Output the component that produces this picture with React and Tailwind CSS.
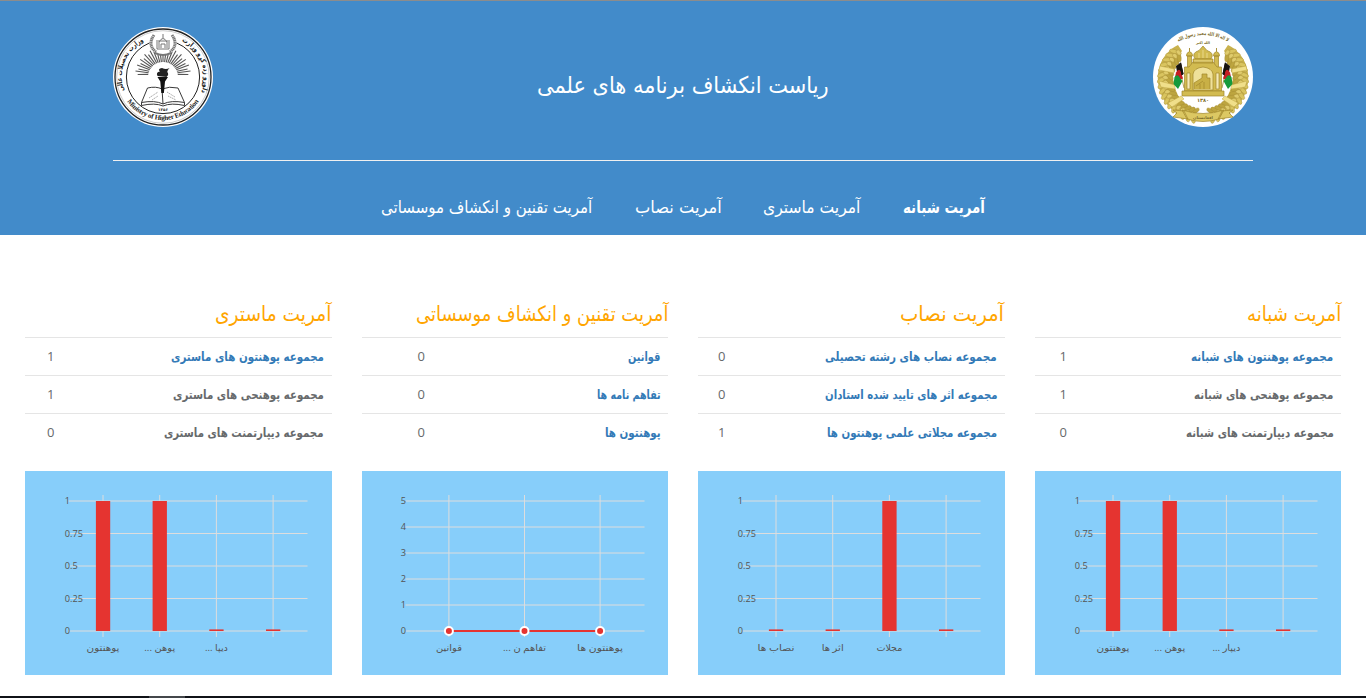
import { useLayoutEffect, useRef } from "react";

const sections = [
  {
    title: "آمریت شبانه", tw: 94, pad: "pl-[25px]",
    rows: [
      ["مجموعه پوهنتون های شبانه", 142, "1", true],
      ["مجموعه پوهنحی های شبانه", 139, "1", false],
      ["مجموعه دیپارتمنت های شبانه", 148, "0", false],
    ],
    kind: "bar", values: [1, 1, 0, 0],
    labels: [["پوهنتون", 33], ["پوهن ...", 31], ["دیپار ...", 28]],
  },
  {
    title: "آمریت نصاب", tw: 104, pad: "pl-[20px]",
    rows: [
      ["مجموعه نصاب های رشته تحصیلی", 172, "0", true],
      ["مجموعه اثر های تایید شده استادان", 172, "0", true],
      ["مجموعه مجلاتی علمی پوهنتون ها", 170, "1", true],
    ],
    kind: "bar", values: [0, 0, 1, 0],
    labels: [["نصاب ها", 37], ["اثر ها", 22], ["مجلات", 26]],
  },
  {
    title: "آمریت تقنین و انکشاف موسساتی", tw: 252, pad: "pl-[56px]",
    rows: [
      ["قوانین", 32, "0", true],
      ["تفاهم نامه ها", 64, "0", true],
      ["پوهنتون ها", 56, "0", true],
    ],
    kind: "line", values: [0, 0, 0],
    labels: [["قوانین", 26], ["تفاهم ن ...", 43], ["پوهنتون ها", 46]],
  },
  {
    title: "آمریت ماستری", tw: 116, pad: "pl-[22px]",
    rows: [
      ["مجموعه پوهنتون های ماستری", 153, "1", true],
      ["مجموعه پوهنحی های ماستری", 151, "1", false],
      ["مجموعه دیپارتمنت های ماستری", 160, "0", false],
    ],
    kind: "bar", values: [1, 1, 0, 0],
    labels: [["پوهنتون", 33], ["پوهن ...", 31], ["دیپا ...", 23]],
  },
];

const nav = [
  ["آمریت شبانه", 82, true],
  ["آمریت ماستری", 97, false],
  ["آمریت نصاب", 87, false],
  ["آمریت تقنین و انکشاف موسساتی", 211, false],
];

/* Single line of text condensed horizontally to a given width. */
function Fit({ width, children }) {
  const ref = useRef(null);
  useLayoutEffect(() => {
    const el = ref.current;
    el.style.transform = `scaleX(${width / el.offsetWidth})`;
  }, [width]);
  return (
    <span className="flex justify-start" style={{ width }}>
      <span ref={ref} className="block shrink-0 origin-right whitespace-nowrap">{children}</span>
    </span>
  );
}

function Chart({ kind, values, labels, title }) {
  const bar = kind === "bar";
  const ticks = bar ? ["0", "0.25", "0.5", "0.75", "1"] : ["0", "1", "2", "3", "4", "5"];
  const step = 130 / (ticks.length - 1);
  const xs = bar ? [78, 134.7, 191.4, 248.1] : [86.9, 162.5, 238.1];
  return (
    <svg viewBox="0 0 306.5 204" className="block h-[204px] w-full bg-[#87cefa]" aria-label={title}>
      <g stroke="#ddd" strokeWidth="1">
        {ticks.map((t, i) => (
          <line key={t} x1="43.5" x2="282.5" y1={160 - i * step} y2={160 - i * step} />
        ))}
        {xs.map((x) => <line key={x} x1={x} x2={x} y1="24" y2="166" />)}
      </g>
      {bar
        ? values.map((v, i) => (
            <rect key={i} x={xs[i] - 7.1} y={v ? 30 : 158.4} width="14.3" height={v ? 130 : 1.6} fill="#e53430" />
          ))
        : (
          <g>
            <line x1={xs[0]} x2={xs[2]} y1="160" y2="160" stroke="#e53430" strokeWidth="2" />
            {xs.map((x) => <circle key={x} cx={x} cy="160" r="4" fill="#e53430" stroke="#fff" strokeWidth="2" />)}
          </g>
        )}
      <g fill="#545454" fontSize="9.2" fontFamily="'Open Sans', sans-serif" direction="ltr" textAnchor="start">
        {ticks.map((t, i) => <text key={t} x={bar ? 39.8 : 38.8} y={163.2 - i * step}>{t}</text>)}
      </g>
      <g fill="#545454" fontSize="9" fontFamily="'Open Sans', 'DejaVu Sans', sans-serif" textAnchor="middle" direction="rtl">
        {labels.map(([t, w], i) => (
          <text key={i} x={xs[i]} y="180" textLength={w} lengthAdjust="spacingAndGlyphs">{t}</text>
        ))}
      </g>
    </svg>
  );
}

function MinistryLogo() {
  const rays = Array.from({ length: 27 }, (_, i) => (-80 + (160 * i) / 26) * (Math.PI / 180));
  return (
    <svg viewBox="0 0 100 100" className="size-[100px]">
      <defs>
        <path id="m-left" d="M12.500 67 A40 40 0 0 1 34 13" />
        <path id="m-right" d="M66 13 A40 40 0 0 1 87 68" />
        <path id="m-bottom" d="M9.500 66 A43.800 43.800 0 0 0 90.500 66" />
      </defs>
      <circle cx="50" cy="50" r="50" fill="#fff" />
      <circle cx="50" cy="50" r="48" fill="none" stroke="#222" strokeWidth="1.300" />
      <circle cx="50" cy="50" r="46.300" fill="none" stroke="#999" strokeWidth="0.5" />
      <circle cx="50" cy="50" r="36.600" fill="none" stroke="#222" strokeWidth="1" />
      {rays.map((a, i) => {
        const r = 25 + (i % 2) * 2.5 + 4 * Math.cos(a);
        return (
          <path
            key={i}
            d={`M${50 + 15 * Math.sin(a)} ${50 - 15 * Math.cos(a)}L${50 + r * Math.sin(a)} ${52 - r * Math.cos(a)}`}
            stroke="#555" strokeWidth="1.1"
          />
        );
      })}
      <ellipse cx="50" cy="16.500" rx="13.500" ry="11.500" fill="#fff" />
      <g fill="none" stroke="#777" strokeWidth="1">
        <path d="M41 8 Q34 18 43 25 M59 8 Q66 18 57 25" strokeWidth="3" strokeDasharray="1.300 .500" />
        <path d="M42 26 Q50 30 58 26" strokeWidth="2" />
        <path d="M44 22 V13 M56 22 V13 M44 22 H56 M46 21 V15 Q50 8 54 15 V21 M50 11 V7 M48 21 V17 H52 V21 M45 14 H55" />
      </g>
      <g fill="none" stroke="#222" strokeWidth="0.9" strokeLinejoin="round">
        <path d="M34.500 61 Q43 59 49 62 Q56 59 65 61 L71.500 75.500 Q58 73 50 77 Q42 73 28.500 75.500 Z" fill="#fff" />
        <path d="M28.500 75.500 L28.500 78.500 Q42 75.500 50 79 Q58 75.500 71.500 78.500 L71.500 75.500 M49 62 L50 77" />
        <path d="M36 71 L45 65 M39 73 L45 69 M54 65 L62 70 M55 69 L63 73" stroke="#888" strokeWidth="0.700" strokeDasharray="1.500 .600" />
      </g>
      <path d="M44.500 50 H55 L52 54.500 L50.900 66 H48.300 L47.300 54.500 Z" fill="#111" />
      <path d="M44.500 49 Q42.500 45 47 44.500 Q44 42 49 41 Q53 43 56.500 41 Q53 45 55 46 Q56 48 53.500 50 Z" fill="#222" />
      <g fill="#222">
        <text fontSize="7" fontWeight="700" fontFamily="'DejaVu Sans', sans-serif">
          <textPath href="#m-left" startOffset="50%" textAnchor="middle" textLength="58" lengthAdjust="spacingAndGlyphs">وزارت تحصیلات عالی</textPath>
        </text>
        <text fontSize="7" fontWeight="700" fontFamily="'DejaVu Sans', sans-serif">
          <textPath href="#m-right" startOffset="50%" textAnchor="middle" textLength="60" lengthAdjust="spacingAndGlyphs">دلوړو زده کړو وزارت</textPath>
        </text>
        <text fontSize="7" fontWeight="700" fontFamily="'Liberation Serif', serif">
          <textPath href="#m-bottom" startOffset="50%" textAnchor="middle" textLength="84">Ministry of Higher Education</textPath>
        </text>
        <text x="50" y="83.500" fontSize="4" fontWeight="700" textAnchor="middle" fontFamily="'DejaVu Sans', sans-serif">۱۳۵۶</text>
      </g>
    </svg>
  );
}

function Wreath() {
  const leaves = Array.from({ length: 17 }, (_, i) => i);
  return (
    <g>
      <path d="M25 18 C7 27 1 47 7 64 C12 80 24 89 41 91 L43 82 C29 78 23 68 21 56 C18 45 21 34 29 24 Z" fill="#c9b24d" />
      {leaves.map((i) => {
        const a = (108 + i * 7.6) * (Math.PI / 180);
        const x = 50 + 37.5 * Math.cos(a);
        const y = 53 + 36 * Math.sin(a);
        const deg = (a * 180) / Math.PI;
        return (
          <g key={i} transform={`translate(${x} ${y}) rotate(${deg})`} strokeWidth="0.400" stroke="#a58c34">
            <ellipse cx="5" cy="0" rx="4.500" ry="2" fill="#d9c45f" transform="rotate(-35)" />
            <ellipse cx="-5" cy="0" rx="4.500" ry="2" fill="#bda53f" transform="rotate(35)" />
            <ellipse rx="3" ry="2" fill="#dfcb6c" />
          </g>
        );
      })}
      <path d="M7 39 L21 42 L21 46 L6 43 Z M6 54 L22 58 L22 62 L8 60 Z M15 76 L28 69 L31 72 L19 80 Z" fill="#f0df8a" stroke="#c0a846" strokeWidth="0.500" />
    </g>
  );
}

function Flag({ flip }) {
  return (
    <g transform={flip ? "matrix(-1 0 0 1 100 0)" : undefined}>
      <path d="M25 34 L31 61" stroke="#a48a2d" strokeWidth="0.800" />
      <path d="M23 39 L28 35.500 L30.500 47 L25 51 Z" fill="#17130f" />
      <path d="M23 45.500 Q26 40.500 28 45 L30 51.500 L24.500 54 L22 50 Z" fill="#c41d23" />
      <path d="M21.500 50 Q25 46 27 51 L29.500 54 L25 62 L20.500 57 Z" fill="#169a3c" />
      <path d="M26.500 36.500 L28 35.500 L30.500 47 L28.500 48.500 Z" fill="#17130f" />
    </g>
  );
}

function NationalEmblem() {
  return (
    <svg viewBox="0 0 100 100" className="size-[100px]">
      <defs><path id="n-top" d="M25 15 Q50 1 75 15" /></defs>
      <circle cx="50" cy="50" r="50" fill="#fff" />
      <Wreath />
      <g transform="matrix(-1 0 0 1 100 0)"><Wreath /></g>
      <g fill="#d2bb50" stroke="#a0862b" strokeWidth="0.700">
        <path d="M34.500 29 H38.500 V41 H34.500 Z M61.500 29 H65.500 V41 H61.500 Z M33.500 29 Q33 26 36.500 24.500 V21 V24.500 Q40 26 39.500 29 Z M60.500 29 Q60 26 63.500 24.500 V21 V24.500 Q67 26 66.500 29 Z" />
        <path d="M42 32 Q38 26 46 23.500 L50 19 L54 23.500 Q62 26 58 32 Z" />
        <path d="M40 32 H60 V36 H40 Z M31.500 40 H36 L40 35 H60 L64 40 H68.500 V64 H31.500 Z" />
        <path d="M29 64 H71 V69 H29 Z" />
        <path d="M40 63 V47 Q41 41 50 40 Q59 41 60 47 V63 Z" fill="#efe19a" />
        <path d="M34 62 V46 H37 V62 Z M63 62 V46 H66 V62 Z" fill="#f5eab8" />
        <path d="M41 62 V56 L49 51 V47 H54 V51 H57 V62 M43 59 L50 54 M47 62 V57 M51 62 V55" fill="#c9b046" />
      </g>
      <path d="M46 31 V26 M50 31 V23 M54 31 V26 M41 34 H59" stroke="#efe09a" strokeWidth="0.800" fill="none" />
      <Flag />
      <Flag flip />
      <path d="M20 83 L31 84 L35 92 L20 90 L24 86 Z M80 83 L69 84 L65 92 L80 90 L76 86 Z M29 83 Q50 90 71 83 L66 92 Q50 97 34 92 Z" fill="#dcc863" stroke="#a0862b" strokeWidth="0.700" />
      <g fill="#7b6a28" fontFamily="'DejaVu Sans', sans-serif" fontWeight="700" textAnchor="middle">
        <text fontSize="5"><textPath href="#n-top" startOffset="50%" textLength="52" lengthAdjust="spacingAndGlyphs">لا اله الا الله محمد رسول الله</textPath></text>
        <text x="50" y="17" fontSize="3.500">الله اكبر</text>
        <text x="50" y="74.500" fontSize="5">۱۳۸۰</text>
        <text x="50" y="91.500" fontSize="4">افغانستان</text>
      </g>
    </svg>
  );
}

export default function App() {
  return (
    <div dir="rtl" className="flex h-[698px] flex-col bg-white font-['DejaVu_Sans',sans-serif]">
      <header className="flex h-[235px] flex-col items-center border-t border-[#8c8c8c] bg-[#428bca] text-white">
        <div className="flex h-[160px] w-[1140px] items-start justify-between border-b border-[#f0f0f0] pt-[26px]">
          <NationalEmblem />
          <h1 className="mt-[40px] text-[23px] leading-[36px]"><Fit width={292}>ریاست انکشاف برنامه های علمی</Fit></h1>
          <MinistryLogo />
        </div>
        <nav className="mt-[33px] flex gap-[42px] text-[17px] leading-[26px]">
          {nav.map(([t, w, active]) => (
            <a key={t} className={active ? "font-bold" : ""}><Fit width={w}>{t}</Fit></a>
          ))}
        </nav>
      </header>
      <main className="grid grow grid-cols-4 content-start gap-[30px] px-[25px] pt-[59px]">
        {sections.map((s) => (
          <section key={s.title}>
            <h2 className="flex h-[43px] items-center pb-[4px] text-[21px] leading-[36px] text-[#ffa500]"><Fit width={s.tw}>{s.title}</Fit></h2>
            <ul className="mb-[20px]">
              {s.rows.map(([t, w, n, link]) => (
                <li key={t} className={`flex h-[38px] items-center justify-between border-t border-[#e5e5e5] pr-[7.5px] text-[12.5px] leading-[20px] ${s.pad}`}>
                  <span className={link ? "font-bold text-[#337ab7]" : "font-bold text-[#676a6c]"}><Fit width={w}>{t}</Fit></span>
                  <span className="pb-[1px] font-['Open_Sans',sans-serif] text-[13px] text-[#676a6c]">{n}</span>
                </li>
              ))}
            </ul>
            <Chart {...s} />
          </section>
        ))}
      </main>
      <footer className="flex h-[2px] bg-[#101318] pr-[1181px]"><span className="w-[36px] bg-[#44474b]" /></footer>
    </div>
  );
}
